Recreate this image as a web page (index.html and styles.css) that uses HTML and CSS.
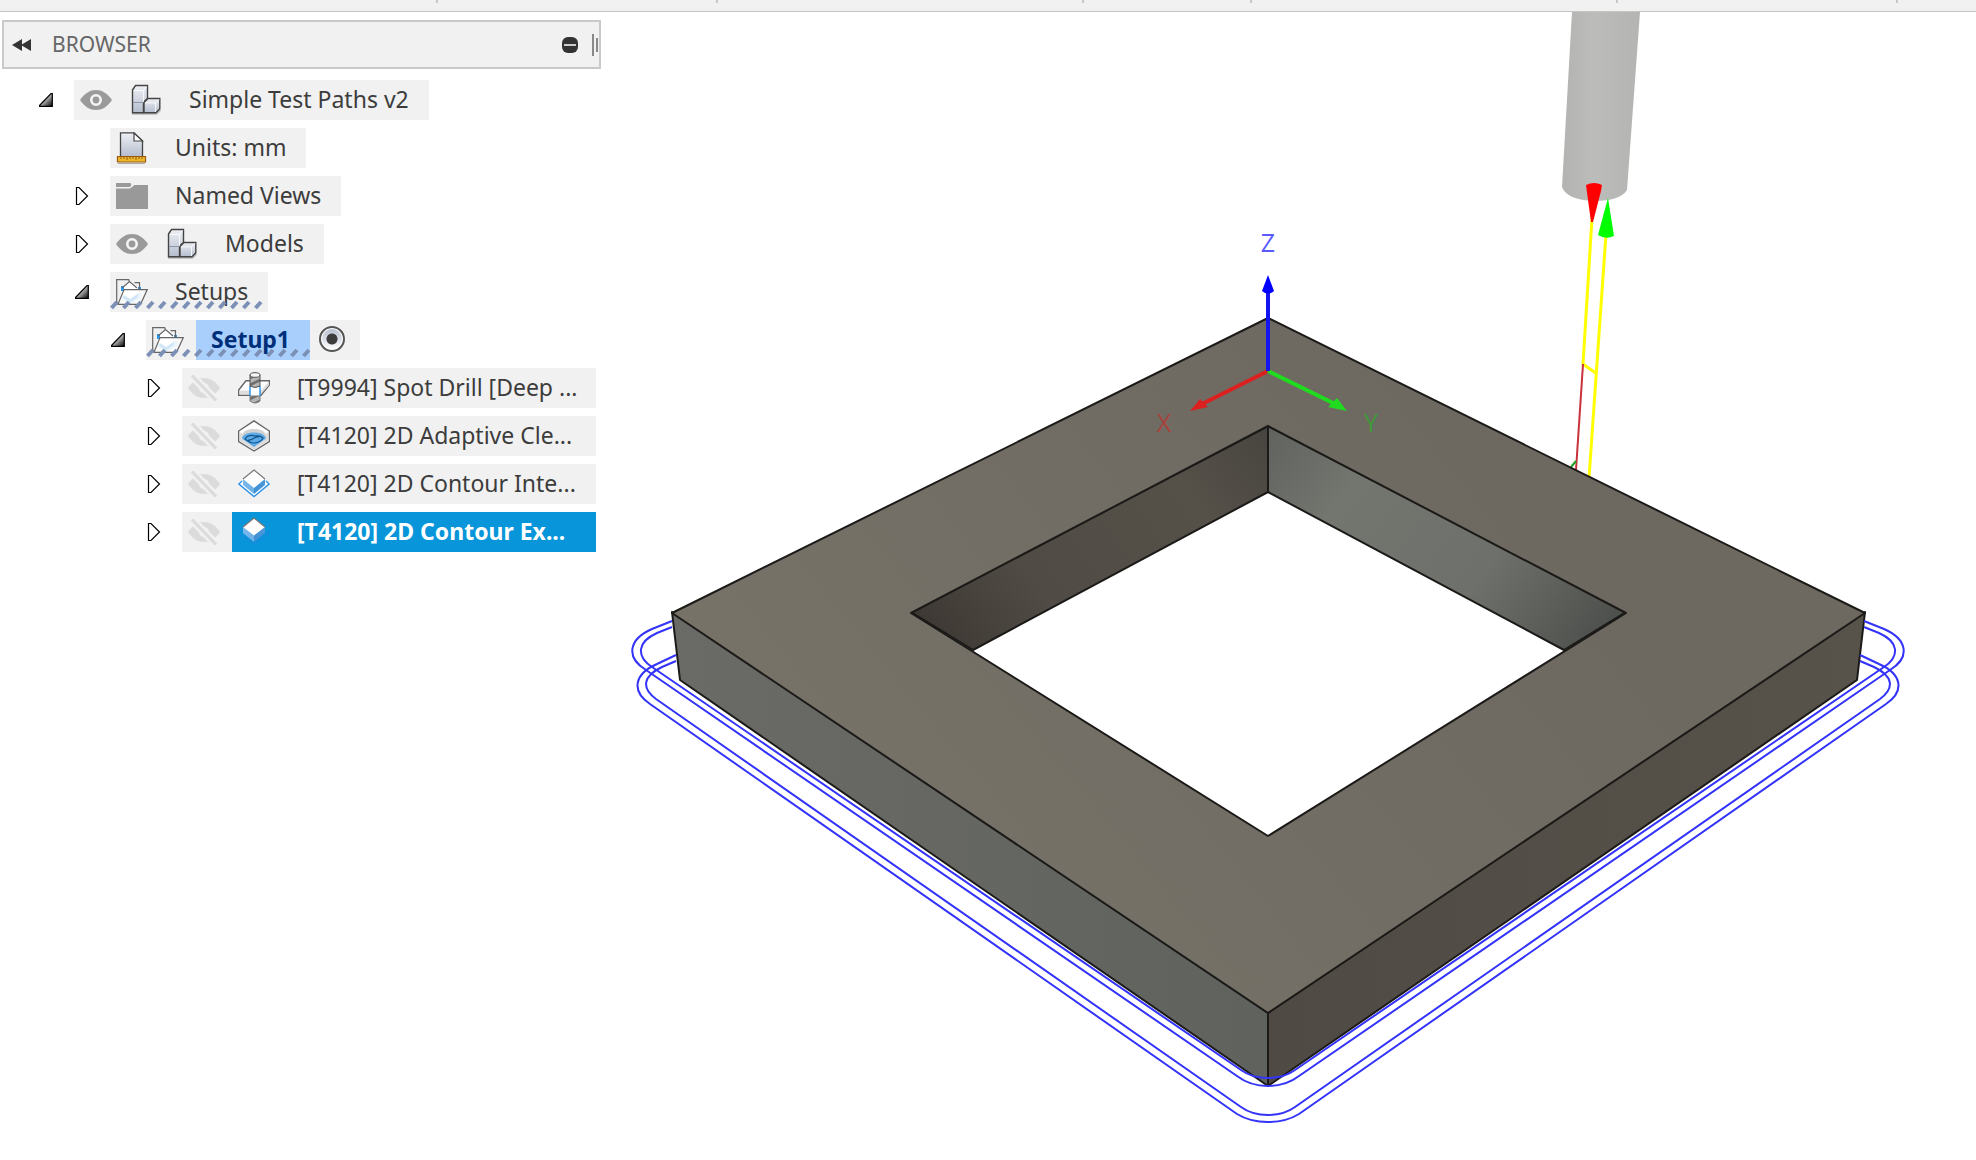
FILE: index.html
```html
<!DOCTYPE html>
<html lang="en">
<head>
<meta charset="utf-8">
<meta name="viewport" content="width=device-width, initial-scale=1">
<title>Simple Test Paths v2</title>
<link rel="stylesheet" href="styles.css">
</head>
<body>
<svg class="defs" width="0" height="0" aria-hidden="true">
  <defs>
    <linearGradient id="steel" x1="0" y1="0" x2="0" y2="1"><stop offset="0" stop-color="#eef0f5"/><stop offset="1" stop-color="#b4bccd"/></linearGradient>
    <linearGradient id="arrowFill" x1="0" y1="0" x2="1" y2="1"><stop offset=".3" stop-color="#eee"/><stop offset="1" stop-color="#000"/></linearGradient>
    <linearGradient id="blueSide"><stop offset="0" stop-color="#7cb9ec"/><stop offset=".5" stop-color="#6cafe6"/><stop offset=".5" stop-color="#3f8fd2"/><stop offset="1" stop-color="#4a98da"/></linearGradient>
    <pattern id="dash" width="12" height="10" patternUnits="userSpaceOnUse"><path d="M1.500 8 7 2" stroke="#7b90b4" stroke-width="4"/></pattern>
    <pattern id="flute" width="10" height="7" patternUnits="userSpaceOnUse" patternTransform="translate(12 0)"><path fill="#b4b4b4" d="M0 0h10v7H0z"/><path d="M0 6 10 1" stroke="#6d6d6d" stroke-width="2.500"/></pattern>
  </defs>
  <symbol id="open" viewBox="0 0 14 14"><path d="M.5 12.500 12 .700h1.300v12.600H.5z" fill="url(#arrowFill)" stroke="#000" stroke-width="1.200"/></symbol>
  <symbol id="closed" viewBox="0 0 14 20"><path d="M1.500 1.500H4L12.500 10 4 18.500H1.500z" fill="#fff" stroke="#000" stroke-width="1.200"/></symbol>
  <symbol id="eye" viewBox="0 0 32 32"><path d="M0 16C5 9 10 6 16 6s11 3 16 10c-5 7-10 10-16 10S5 23 0 16z" fill="#9a9a9a"/><circle cx="16" cy="16" r="4.700" fill="none" stroke="#f5f5f5" stroke-width="2.600"/></symbol>
  <symbol id="eye-off" viewBox="0 0 32 32"><path d="M0 16C5 9 10 6 16 6s11 3 16 10c-5 7-10 10-16 10S5 23 0 16z" fill="#dbdbdb"/><circle cx="16" cy="16" r="5" fill="#f1f1f1"/><path d="M2 2 30 30" stroke="#f1f1f1" stroke-width="8"/><path d="M4 3.500 28 28.500" stroke="#dbdbdb" stroke-width="3"/></symbol>
  <symbol id="part" viewBox="0 0 32 32"><path d="M2 29.800h24.500l4-4" fill="none" stroke="#bbb" stroke-width="2"/><path d="M2.500 6 5.500 1.500h12v13L13.500 18v10.800h-11z" fill="url(#steel)" stroke="#444" stroke-width="1.400"/><path d="M14 18.500 18 14.500h11.800v10.200L26 28.800H14z" fill="url(#steel)" stroke="#444" stroke-width="1.400"/><path d="M4 6.500h9.500V18M13.500 6.500l3-4M15 18.800h10.500V28M25.500 18.800l3.500-3.500" fill="none" stroke="#fff" stroke-opacity=".8"/><path d="M3 18.500h10.500" stroke="#8f98aa"/></symbol>
  <symbol id="units" viewBox="0 0 32 32"><path d="M4.500 25V.8H18L26.500 9v16z" fill="url(#steel)" stroke="#444" stroke-width="1.300"/><path d="M18 1v8h8.500z" fill="#fff" stroke="#444" stroke-width="1.200"/><path d="M2 31.500h27" stroke="#aaa"/><path d="M1.500 24.500h28v5.500h-28z" fill="#eab92b" stroke="#9c5a10" stroke-width="1.200"/><path d="M5 25v2m3-2v2m3-2v3m3-3v2m3-2v2m3-2v3m3-3v2m3-2v2" stroke="#9c5a10"/></symbol>
  <symbol id="folder" viewBox="0 0 32 32"><path d="M0 3h13.500c2 0 2.500 2 .5 4H0zM0 8.500h14L18.500 5H32v24H0z" fill="#999"/></symbol>
  <symbol id="setup" viewBox="0 0 32 32"><path d="m5 12 9-7 9 7v8l-9 7-9-6z" fill="#fff"/><path d="m5 18 9 6 11-8v6l-11 6-9-6z" fill="#d3e8f8"/><path d="M5 10h3v5H5zM22 11h3v3h-3z" fill="#2b9af0"/><path d="M3 27.500.7 26V3.700h12l1 2.500M18.500 6.700h5V13M6 12l7.500-6.500L21 12" fill="none" stroke="#666" stroke-width="1.200"/><path d="M8 13.600h23.300L24.500 28.300H2z" fill="#fff" fill-opacity=".55" stroke="#666" stroke-width="1.200"/><path d="m8 19 6 4 9-6-2 5-7 4.500L7 22z" fill="#cfe6f7"/></symbol>
  <symbol id="drill" viewBox="0 0 32 32"><path d="M.7 18 8 8.700h23.300V13L23 23.300H.7z" fill="#fff" stroke="#666" stroke-width="1.400"/><path d="M1.500 18.500H23l8-9V13l-8.500 9.500h-21z" fill="#ddd"/><path d="M12 14h10v10H12z" fill="#fff"/><path d="M12 14v10m10-10v10" stroke="#1e8fe8" stroke-width="1.400"/><path d="M12 24h10v5q-5 4-10 0z" fill="url(#flute)" stroke="#777"/><path d="M12 3q5-4 10 0v11q-5 3-10 0z" fill="url(#flute)" stroke="#555"/><ellipse cx="17" cy="3" rx="5" ry="2.300" fill="#f5f5f5" stroke="#555"/></symbol>
  <symbol id="adaptive" viewBox="0 0 32 32"><path d="M16 .8 31.300 11v10.500L16 31 .7 21.500V11z" fill="#fff" stroke="#666" stroke-width="1.400"/><path d="M1.500 12 16 21 30.500 12v9L16 30 1.500 21z" fill="#ddd"/><path d="M4 17c0-6 5-8 12-8s12 2 12 8L16 25.500z" fill="#d2d2d2"/><path d="M4 18.500c1-4 6-6 12-6s11 2 12 6L16 27z" fill="#5eaae6"/><path d="M7 19c2-4 7-4 10-3 3 0 5-1 8 2-2 4-6 5-10 5-3 0-5-2-8-4zM10 20c5 1 6-4 11-3" fill="none" stroke="#10568f" stroke-width="1.200"/></symbol>
  <symbol id="contour-in" viewBox="0 0 32 32"><path d="M4 13 .9 16 16 28.600 31.100 16 28 13" fill="#fff" stroke="#2c92e6" stroke-width="1.400"/><path d="M5 11v6l11 9 11-9v-6z" fill="url(#blueSide)"/><path d="M16 2 27 11 16 20 5 11z" fill="#fff"/><path d="M5 11 16 2l11 9" fill="none" stroke="#777" stroke-width="1.200"/></symbol>
  <symbol id="contour-out" viewBox="0 0 32 32"><path d="M3 14.500 1 17l15 11 15-11-2-2.500" fill="none" stroke="#168ade" stroke-width="1.200"/><path d="M5 11v6l11 9 11-9v-6z" fill="url(#blueSide)"/><path d="M16 2 27 11 16 19.500 5 11z" fill="#fff"/><path d="M5 11 16 2l11 9" fill="none" stroke="#777" stroke-width="1.200"/></symbol>
</svg>

<div class="toolbar"><span></span><span></span><span></span><span></span><span></span><span></span><span></span></div>
<main class="workspace">
  <aside class="browser">
    <header class="panel-head">
      <button class="icon-btn" aria-label="Collapse panel"><svg width="20" height="12" viewBox="0 0 20 12"><path d="M0 6 10 0v12zM9 6l10-6v12z" fill="#333"/></svg></button>
      <h1>BROWSER</h1>
      <button class="icon-btn" aria-label="Minimize"><svg width="16" height="16"><rect width="16" height="16" rx="6" fill="#333"/><path d="M2 8h12" stroke="#ccc" stroke-width="2"/></svg></button>
      <span class="grip"></span>
    </header>
    <ul class="tree">
      <li>
        <div class="row"><button class="expander" aria-label="Collapse"><svg width="14" height="14"><use href="#open"/></svg></button>
          <div class="chip"><button class="vis" aria-label="Toggle visibility"><svg><use href="#eye"/></svg></button><button class="node"><svg><use href="#part"/></svg><span class="label">Simple Test Paths v2</span></button></div></div>
        <ul>
          <li><div class="row"><span class="expander"></span><div class="chip"><button class="node"><svg><use href="#units"/></svg><span class="label">Units: mm</span></button></div></div></li>
          <li><div class="row"><button class="expander" aria-label="Expand"><svg width="14" height="20"><use href="#closed"/></svg></button><div class="chip"><button class="node"><svg><use href="#folder"/></svg><span class="label">Named Views</span></button></div></div></li>
          <li><div class="row"><button class="expander" aria-label="Expand"><svg width="14" height="20"><use href="#closed"/></svg></button><div class="chip"><button class="vis" aria-label="Toggle visibility"><svg><use href="#eye"/></svg></button><button class="node"><svg><use href="#part"/></svg><span class="label">Models</span></button></div></div></li>
          <li>
            <div class="row"><button class="expander" aria-label="Collapse"><svg width="14" height="14"><use href="#open"/></svg></button><div class="chip"><button class="node"><svg><use href="#setup"/></svg><span class="label">Setups</span><svg class="dashes"><rect width="156" height="10" fill="url(#dash)"/></svg></button></div></div>
            <ul>
              <li>
                <div class="row"><button class="expander" aria-label="Collapse"><svg width="14" height="14"><use href="#open"/></svg></button><div class="chip"><button class="node active"><svg><use href="#setup"/></svg><span class="label">Setup1</span><svg class="dashes"><rect width="100%" height="10" fill="url(#dash)"/></svg></button><input class="radio" type="radio" name="setup" aria-label="Activate Setup1" checked></div></div>
                <ul class="operations">
                  <li><div class="row"><button class="expander" aria-label="Expand"><svg width="14" height="20"><use href="#closed"/></svg></button><div class="chip"><button class="vis" aria-label="Toggle visibility"><svg><use href="#eye-off"/></svg></button><button class="node"><svg><use href="#drill"/></svg><span class="label">[T9994] Spot Drill [Deep ...</span></button></div></div></li>
                  <li><div class="row"><button class="expander" aria-label="Expand"><svg width="14" height="20"><use href="#closed"/></svg></button><div class="chip"><button class="vis" aria-label="Toggle visibility"><svg><use href="#eye-off"/></svg></button><button class="node"><svg><use href="#adaptive"/></svg><span class="label">[T4120] 2D Adaptive Cle...</span></button></div></div></li>
                  <li><div class="row"><button class="expander" aria-label="Expand"><svg width="14" height="20"><use href="#closed"/></svg></button><div class="chip"><button class="vis" aria-label="Toggle visibility"><svg><use href="#eye-off"/></svg></button><button class="node"><svg><use href="#contour-in"/></svg><span class="label">[T4120] 2D Contour Inte...</span></button></div></div></li>
                  <li><div class="row"><button class="expander" aria-label="Expand"><svg width="14" height="20"><use href="#closed"/></svg></button><div class="chip"><button class="vis" aria-label="Toggle visibility"><svg><use href="#eye-off"/></svg></button><button class="node selected"><svg><use href="#contour-out"/></svg><span class="label">[T4120] 2D Contour Ex...</span></button></div></div></li>
                </ul>
              </li>
            </ul>
          </li>
        </ul>
      </li>
    </ul>
  </aside>

  <svg class="viewport" viewBox="602 12 1374 1148" role="img" aria-label="Stock model with tool paths">
    <defs>
      <linearGradient id="top" gradientUnits="userSpaceOnUse" x1="900" y1="850" x2="1450" y2="400"><stop offset="0" stop-color="#777268"/><stop offset="1" stop-color="#6d6860"/></linearGradient>
      <linearGradient id="frontLeft"><stop offset="0" stop-color="#6a6b66"/><stop offset="1" stop-color="#60625d"/></linearGradient>
      <linearGradient id="frontRight"><stop offset="0" stop-color="#4f4b44"/><stop offset="1" stop-color="#57524a"/></linearGradient>
      <linearGradient id="innerLeft" gradientUnits="userSpaceOnUse" x1="950" y1="665" x2="1268" y2="430"><stop offset="0" stop-color="#3d3833"/><stop offset=".3" stop-color="#504c45"/><stop offset=".75" stop-color="#555149"/><stop offset="1" stop-color="#48443f"/></linearGradient>
      <linearGradient id="innerRight" gradientUnits="userSpaceOnUse" x1="1268" y1="430" x2="1588" y2="665"><stop offset="0" stop-color="#60635e"/><stop offset=".25" stop-color="#73766f"/><stop offset=".65" stop-color="#6e716b"/><stop offset="1" stop-color="#4b4e4a"/></linearGradient>
      <linearGradient id="shank"><stop offset="0" stop-color="#b3b3b1"/><stop offset=".4" stop-color="#bcbcba"/><stop offset="1" stop-color="#b4b4b2"/></linearGradient>
      <g id="rings">
        <path d="M672 621 652 629C629 639 625 657 646 670L1237 1076Q1250 1086 1268 1086"/>
        <path d="M672 627 657 633C637 642 636 656 652 667L1241 1070Q1252 1078 1268 1078"/>
        <path d="M676 655 657 664C634 674 631 691 650 704L1237 1114Q1250 1122 1268 1122"/>
        <path d="M676 661 662 667C643 676 641 688 656 699L1241 1107Q1252 1115 1268 1115"/>
      </g>
    </defs>
    <path d="M1572 12h68L1627 190Q1620 201 1594 201 1567 200 1562 187z" fill="url(#shank)"/>
    <g fill="none" stroke-width="2">
      <path d="M1592 218 1583 364 1597 374M1606 234 1589 478" stroke="#ff0" stroke-width="3"/>
      <path d="M1583 364 1576 470" stroke="#c8323a"/>
      <path d="M1571 467 1576 461" stroke="#22a022"/>
    </g>
    <path d="M1586 185Q1594 181 1602 185L1601 191 1593 222H1591z" fill="#f00"/>
    <path d="M1608 198 1614 236Q1606 240 1598 235z" fill="#0f0"/>
    <g stroke="#1b1a18" stroke-width="2" stroke-linejoin="round">
      <path d="M672 612 1268 1013V1086L680 680z" fill="url(#frontLeft)"/>
      <path d="M1865 612 1268 1013V1086L1857 680z" fill="url(#frontRight)"/>
      <path d="M1268 426V492L973 650 911 612z" fill="url(#innerLeft)"/>
      <path d="M1268 426V492L1564 650 1626 612z" fill="url(#innerRight)"/>
      <path d="M1268 318 1865 613 1268 1013 672 613zM1268 426 911 613 1268 836 1626 613z" fill="url(#top)" fill-rule="evenodd"/>
    </g>
    <g fill="none" stroke="#3333fa" stroke-width="2"><use href="#rings"/><use href="#rings" transform="translate(2536 0) scale(-1 1)"/></g>
    <path d="M1268 371 1202 404" stroke="#dc2020" stroke-width="4"/><path d="M1190 411 1200 399 1208 407z" fill="#dc2020"/>
    <path d="M1268 371 1335 404" stroke="#1fdc1f" stroke-width="4"/><path d="M1347 411 1337 398 1328 407z" fill="#1fdc1f"/>
    <path d="M1268 371V290" stroke="#1414f0" stroke-width="4"/><path d="M1268 275 1274 291Q1268 296 1262 291z" fill="#00f"/>
    <g class="axis"><text x="1268" y="252" fill="#5a5aff">Z</text><text x="1164" y="432" fill="#a8433c">X</text><text x="1371" y="432" fill="#3e9a38">Y</text></g>
  </svg>
</main>
</body>
</html>
```
FILE: styles.css
```css
* { box-sizing: border-box; }

body {
  margin: 0;
  min-height: 100vh;
  display: flex;
  flex-direction: column;
  background: #fff;
  color: #3c3c3c;
  font-family: "Noto Sans", "Open Sans", sans-serif;
  font-size: 23px;
}

button {
  margin: 0;
  padding: 0;
  border: 0;
  background: none;
  color: inherit;
  font: inherit;
  cursor: pointer;
}

svg { display: block; flex: none; }
.defs { position: absolute; }

.toolbar {
  height: 12px;
  display: grid;
  grid-template-columns: 438fr 280fr 366fr 168fr 366fr 280fr 78fr;
  background: #f1f1f1;
  border-bottom: 1px solid #c4c4c4;
}
.toolbar span { height: 3px; border-right: 2px solid #c8c8c8; }
.toolbar span:last-child { border: 0; }

.workspace { flex: 1; display: flex; }
.browser { flex: none; width: 602px; padding: 8px 0; }

.panel-head {
  height: 49px;
  margin: 0 1px 11px 2px;
  padding: 0 1px 0 8px;
  display: flex;
  align-items: center;
  background: #f1f1f1;
  border: 2px solid #c9c9c9;
}
.panel-head h1 {
  flex: 1;
  margin: 0 0 0 20px;
  padding-bottom: 2px;
  color: #666;
  font-size: 21px;
  font-weight: 400;
}
.grip {
  width: 6px;
  height: 22px;
  margin-left: 14px;
  border-left: 2px solid #888;
  display: flex;
  align-items: center;
  justify-content: flex-end;
}
.grip::after { content: ""; width: 2px; height: 14px; background: #888; }

.tree, .tree ul { margin: 0; padding: 0; list-style: none; }
.tree { padding: 0 6px 0 39px; }
.tree ul { padding-left: 36px; }

.row { display: flex; height: 40px; margin-bottom: 8px; }
.expander { flex: none; width: 35px; display: flex; align-items: center; }
.chip { display: flex; background: #f1f1f1; white-space: nowrap; }

.vis { display: flex; align-items: center; padding: 0 12px 0 6px; }
.vis svg, .node svg { width: 32px; height: 32px; }
.node { position: relative; display: flex; align-items: center; padding-left: 6px; }
.label { padding: 0 20px 2px 27px; line-height: 38px; }

.node .dashes {
  position: absolute;
  left: 0;
  bottom: 2px;
  width: 100%;
  height: 10px;
}

.active .label {
  margin-left: 12px;
  padding: 0 20px 2px 15px;
  background: #a9cffd;
  color: #002f7a;
  font-weight: 700;
}

.radio {
  appearance: none;
  width: 26px;
  height: 26px;
  margin: 6px 15px 0 9px;
  border: 2px solid #555;
  border-radius: 50%;
  background: radial-gradient(circle, #3c3c3c 5px, transparent 6px), linear-gradient(#b4bccc, #fff);
  box-shadow: inset 0 0 0 1px #fff;
}

.operations .chip, .operations .node { flex: 1; }
.operations .label { padding-right: 0; }
.selected { background: #0895d9; color: #fff; font-weight: 700; }

.viewport { flex: 1 1 0; min-width: 0; height: auto; align-self: flex-start; }
.axis { font-family: "Open Sans", sans-serif; font-size: 25px; font-weight: 400; text-anchor: middle; }
```
